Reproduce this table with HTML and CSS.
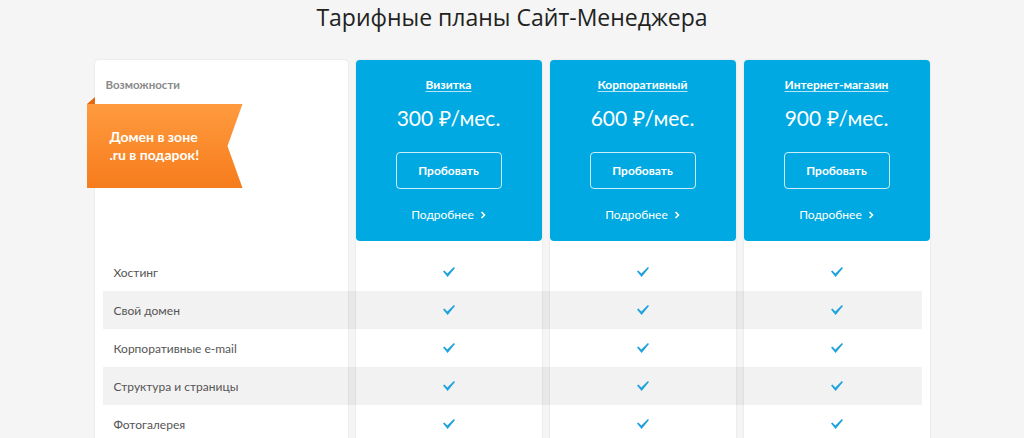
FILE: index.html
```html
<!DOCTYPE html>
<html lang="ru">
<head>
<meta charset="utf-8">
<title>Тарифные планы</title>
<link rel="stylesheet" href="styles.css">
</head>
<body>
<main class="page">
  <h1 class="title">Тарифные планы Сайт-Менеджера</h1>
  <div class="table">
    <div class="card card-1">
      <div class="feat-head">Возможности</div>
      <div class="ribbon">Домен в зоне<br>.ru в подарок!</div>
    </div>
    <div class="card card-2">
      <div class="plan">
        <a class="plan-name">Визитка</a>
        <div class="plan-price">300 ₽/мес.</div>
        <a class="btn">Пробовать</a>
        <a class="more">Подробнее <svg width="6" height="8" viewBox="0 0 6 8"><path d="M1.5 1 L4.5 4 L1.5 7" fill="none" stroke="#fff" stroke-width="1.6"/></svg></a>
      </div>
    </div>
    <div class="card card-3">
      <div class="plan">
        <a class="plan-name">Корпоративный</a>
        <div class="plan-price">600 ₽/мес.</div>
        <a class="btn">Пробовать</a>
        <a class="more">Подробнее <svg width="6" height="8" viewBox="0 0 6 8"><path d="M1.5 1 L4.5 4 L1.5 7" fill="none" stroke="#fff" stroke-width="1.6"/></svg></a>
      </div>
    </div>
    <div class="card card-4">
      <div class="plan">
        <a class="plan-name">Интернет-магазин</a>
        <div class="plan-price">900 ₽/мес.</div>
        <a class="btn">Пробовать</a>
        <a class="more">Подробнее <svg width="6" height="8" viewBox="0 0 6 8"><path d="M1.5 1 L4.5 4 L1.5 7" fill="none" stroke="#fff" stroke-width="1.6"/></svg></a>
      </div>
    </div>

    <div class="features">
      <div class="frow">
        <div class="label">Хостинг</div>
        <div class="cell"><svg class="check" viewBox="0 0 12 10"><path d="M0 4.6 L1.4 3.6 L4.3 6.4 L10.9 0 L12 1 L4.6 10 Z"/></svg></div>
        <div class="cell"><svg class="check" viewBox="0 0 12 10"><path d="M0 4.6 L1.4 3.6 L4.3 6.4 L10.9 0 L12 1 L4.6 10 Z"/></svg></div>
        <div class="cell"><svg class="check" viewBox="0 0 12 10"><path d="M0 4.6 L1.4 3.6 L4.3 6.4 L10.9 0 L12 1 L4.6 10 Z"/></svg></div>
      </div>
      <div class="frow">
        <div class="label">Свой домен</div>
        <div class="cell"><svg class="check" viewBox="0 0 12 10"><path d="M0 4.6 L1.4 3.6 L4.3 6.4 L10.9 0 L12 1 L4.6 10 Z"/></svg></div>
        <div class="cell"><svg class="check" viewBox="0 0 12 10"><path d="M0 4.6 L1.4 3.6 L4.3 6.4 L10.9 0 L12 1 L4.6 10 Z"/></svg></div>
        <div class="cell"><svg class="check" viewBox="0 0 12 10"><path d="M0 4.6 L1.4 3.6 L4.3 6.4 L10.9 0 L12 1 L4.6 10 Z"/></svg></div>
      </div>
      <div class="frow">
        <div class="label">Корпоративные e-mail</div>
        <div class="cell"><svg class="check" viewBox="0 0 12 10"><path d="M0 4.6 L1.4 3.6 L4.3 6.4 L10.9 0 L12 1 L4.6 10 Z"/></svg></div>
        <div class="cell"><svg class="check" viewBox="0 0 12 10"><path d="M0 4.6 L1.4 3.6 L4.3 6.4 L10.9 0 L12 1 L4.6 10 Z"/></svg></div>
        <div class="cell"><svg class="check" viewBox="0 0 12 10"><path d="M0 4.6 L1.4 3.6 L4.3 6.4 L10.9 0 L12 1 L4.6 10 Z"/></svg></div>
      </div>
      <div class="frow">
        <div class="label">Структура и страницы</div>
        <div class="cell"><svg class="check" viewBox="0 0 12 10"><path d="M0 4.6 L1.4 3.6 L4.3 6.4 L10.9 0 L12 1 L4.6 10 Z"/></svg></div>
        <div class="cell"><svg class="check" viewBox="0 0 12 10"><path d="M0 4.6 L1.4 3.6 L4.3 6.4 L10.9 0 L12 1 L4.6 10 Z"/></svg></div>
        <div class="cell"><svg class="check" viewBox="0 0 12 10"><path d="M0 4.6 L1.4 3.6 L4.3 6.4 L10.9 0 L12 1 L4.6 10 Z"/></svg></div>
      </div>
      <div class="frow">
        <div class="label">Фотогалерея</div>
        <div class="cell"><svg class="check" viewBox="0 0 12 10"><path d="M0 4.6 L1.4 3.6 L4.3 6.4 L10.9 0 L12 1 L4.6 10 Z"/></svg></div>
        <div class="cell"><svg class="check" viewBox="0 0 12 10"><path d="M0 4.6 L1.4 3.6 L4.3 6.4 L10.9 0 L12 1 L4.6 10 Z"/></svg></div>
        <div class="cell"><svg class="check" viewBox="0 0 12 10"><path d="M0 4.6 L1.4 3.6 L4.3 6.4 L10.9 0 L12 1 L4.6 10 Z"/></svg></div>
      </div>
    </div>
  </div>
</main>
</body>
</html>
```

FILE: styles.css
```css
* { box-sizing: border-box; }
html, body { margin: 0; padding: 0; }
body {
  background: #f5f5f5;
  font-family: "Lato", "Open Sans", sans-serif;
  color: #333;
}
.page { width: 1024px; margin: 0 auto; }
.title {
  margin: 0;
  text-align: center;
  font-family: "Open Sans", sans-serif;
  font-weight: 400;
  font-size: 23px;
  line-height: 34px;
  color: #222;
}
.table {
  width: 835px;
  margin: 26px auto 0;
  display: grid;
  grid-template-columns: 253px repeat(3, 186px);
  grid-template-rows: 181px 12px auto;
  column-gap: 8px;
}
.card {
  grid-row: 1 / 4;
  background: #fff;
  border-radius: 4px;
  box-shadow: 0 0 2px rgba(0,0,0,0.12);
}
.card-1 { grid-column: 1; padding-top: 17px; position: relative; }
.card-2 { grid-column: 2; }
.card-3 { grid-column: 3; }
.card-4 { grid-column: 4; }

.feat-head {
  padding-left: 11px;
  font-size: 11.5px;
  font-weight: 700;
  line-height: 16px;
  color: #8a8a8a;
}
.ribbon {
  margin: 11px 0 0 -8px;
  width: 156px;
  height: 84px;
  padding: 24px 0 0 23px;
  font-size: 14px;
  font-weight: 700;
  line-height: 18px;
  color: #fff;
  background: linear-gradient(#ff9b3f, #f67c1c);
  clip-path: polygon(0 0, 100% 0, calc(100% - 15px) 50%, 100% 100%, 0 100%);
}
.card-1::before {
  content: "";
  position: absolute;
  left: -8px;
  top: 37px;
  width: 0; height: 0;
  border-style: solid;
  border-width: 0 0 7px 8px;
  border-color: transparent transparent #e2690f transparent;
}

.plan {
  height: 181px;
  background: #00a9e1;
  border-radius: 4px;
  display: flex;
  flex-direction: column;
  align-items: center;
  padding-top: 17px;
  color: #fff;
}
.plan-name {
  font-size: 12px;
  font-weight: 700;
  line-height: 16px;
  text-decoration: underline;
  text-decoration-color: rgba(255,255,255,0.7);
  text-underline-offset: 2px;
}
.plan-price {
  margin-top: 12px;
  font-size: 21px;
  line-height: 26px;
}
.btn {
  margin-top: 21px;
  width: 106px;
  height: 37px;
  border: 1px solid rgba(255,255,255,0.8);
  border-radius: 4px;
  display: flex;
  align-items: center;
  justify-content: center;
  font-size: 12px;
  font-weight: 700;
}
.more {
  margin-top: 18px;
  font-size: 12px;
  line-height: 16px;
  display: flex;
  align-items: center;
  gap: 6px;
}

.features {
  grid-column: 1 / -1;
  grid-row: 3;
  position: relative;
  z-index: 1;
}
.frow {
  position: relative;
  height: 38px;
  display: grid;
  grid-template-columns: 253px repeat(3, 186px);
  column-gap: 8px;
  align-items: center;
}
.frow:nth-child(even)::before {
  content: "";
  position: absolute;
  top: 0; bottom: 0; left: 8px; right: 8px;
  background: rgba(0,0,0,0.05);
}
.label {
  position: relative;
  padding-left: 19px;
  font-size: 12px;
  color: #555;
}
.cell { position: relative; display: flex; justify-content: center; }
.check { width: 12px; height: 10px; fill: #1fa2dd; }
```
